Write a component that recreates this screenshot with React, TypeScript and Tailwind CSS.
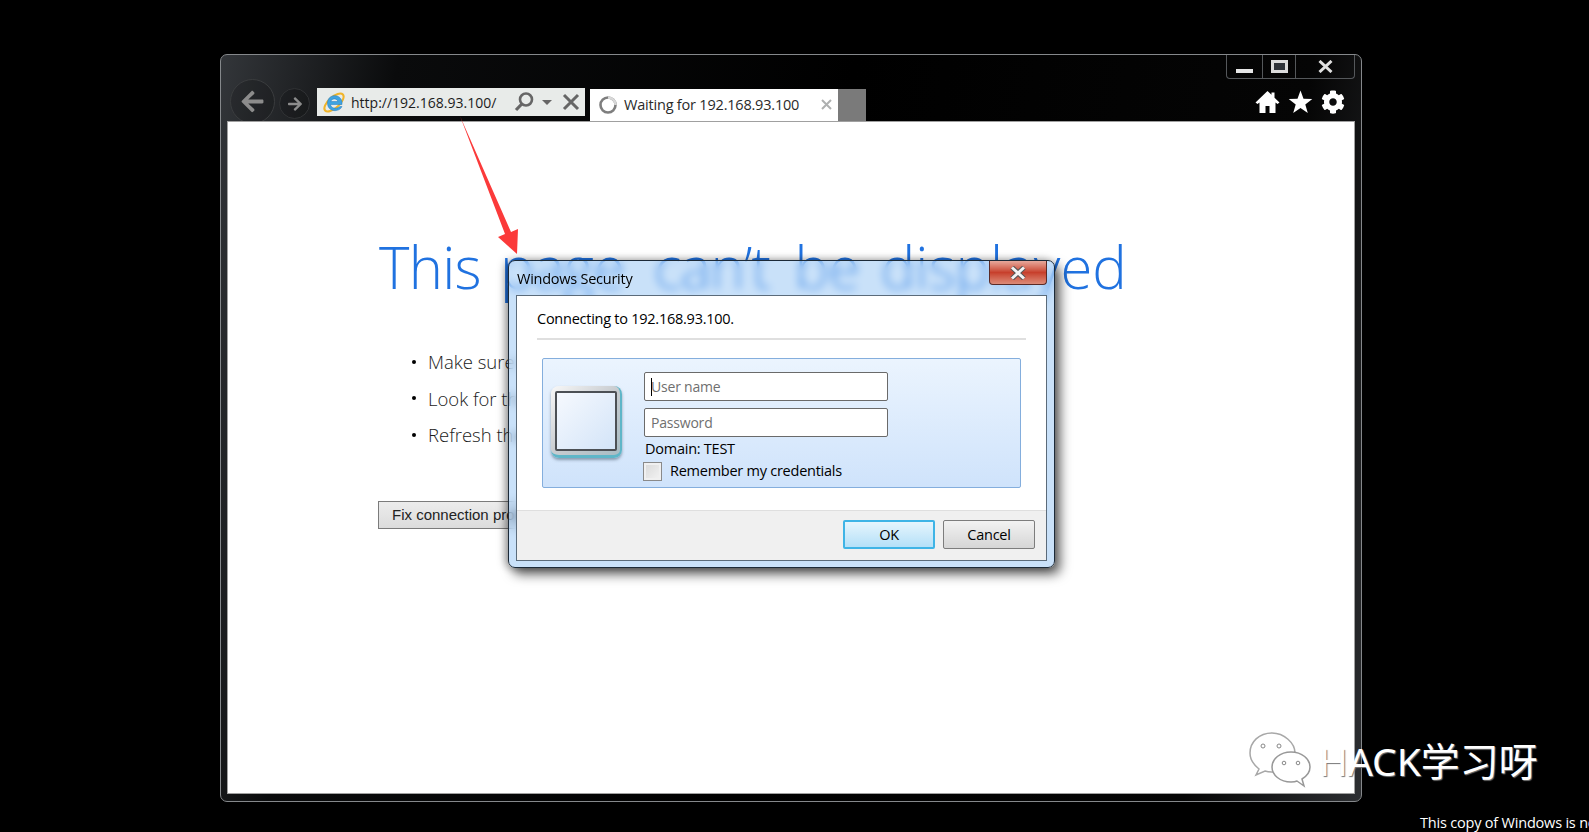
import { FaArrowLeft, FaArrowRight, FaCog } from 'react-icons/fa';

const SEGOE = "font-['Open_Sans','Noto_Sans',sans-serif]";

function IeLogo() {
  return (
    <svg width="24" height="25" viewBox="0 0 24 25" className="shrink-0">
      <ellipse cx="12" cy="12.5" rx="12" ry="5.5" transform="rotate(-42 12 12.5)" fill="none" stroke="#f0b429" strokeWidth="2" />
      <path d="M20 14.5H8.5c.4 4 6 5 9.5 2l2 0c-2.5 6-14.5 6-14.5-3.5 0-9 12.5-10 14.5-1.5z M8.8 11.5h7c-.6-3.5-6.2-3.5-7 0z" fill="#3fa3e0" fillRule="evenodd" stroke="#1f78c0" strokeWidth="0.5" />
    </svg>
  );
}

function AddressBar() {
  return (
    <div className="flex h-[28px] w-[268px] items-center bg-[#e8ebe9] pl-[5px]">
      <IeLogo />
      <span className={`${SEGOE} ml-[5px] w-[153px] text-[14px] whitespace-nowrap text-[#1c1c1c]`}>http://192.168.93.100/</span>
      <svg width="22" height="22" viewBox="0 0 22 22" className="ml-[9px]" fill="none" stroke="#666" strokeWidth="2.6">
        <circle cx="13" cy="8.5" r="6" />
        <path d="M8.8 13 3 19" strokeWidth="3.2" />
      </svg>
      <span className="ml-[7px] h-0 w-0 border-x-[5px] border-t-[5px] border-x-transparent border-t-[#666]" />
      <svg width="18" height="18" viewBox="0 0 18 18" className="ml-[10px]" stroke="#666" strokeWidth="3">
        <path d="M2 2l14 14M16 2 2 16" />
      </svg>
    </div>
  );
}

function Tab() {
  return (
    <div className="flex h-[33px] w-[248px] items-center bg-white pb-[2px] pl-[8px]">
      <svg width="20" height="20" viewBox="0 0 20 20" fill="none" className="shrink-0">
        <circle cx="10" cy="10" r="7.5" stroke="#7e7e7e" strokeWidth="2.6" />
        <path d="M10 2.5a7.5 7.5 0 0 1 7.5 7.5" stroke="#d8d8d8" strokeWidth="2.6" />
      </svg>
      <span className={`${SEGOE} ml-[6px] w-[197px] text-[14.5px] tracking-[-0.2px] whitespace-nowrap text-[#2a2a2a]`}>Waiting for 192.168.93.100</span>
      <svg width="11" height="11" viewBox="0 0 11 11" stroke="#aeb0b0" strokeWidth="2">
        <path d="M1 1l9 9M10 1 1 10" />
      </svg>
    </div>
  );
}

function CaptionButtons() {
  return (
    <div className="flex h-[24px] w-[129px] rounded-b-[4px] border border-t-0 border-[#55585b]">
      <div className="flex w-[36px] items-end justify-center border-r border-[#55585b] pb-[5px]">
        <span className="h-[4px] w-[17px] bg-[#e6e6e6]" />
      </div>
      <div className="flex w-[33px] items-center justify-center border-r border-[#55585b]">
        <span className="h-[13px] w-[17px] border-[3px] border-[#dcdcdc] bg-[#30343a]" />
      </div>
      <div className="flex flex-1 items-center justify-center">
        <svg width="15" height="13" viewBox="0 0 15 13" stroke="#e0e0e0" strokeWidth="3">
          <path d="M1.5 1 13.5 12M13.5 1 1.5 12" />
        </svg>
      </div>
    </div>
  );
}

function Toolbar() {
  return (
    <div className="flex h-[66px] flex-col">
      <div className="flex justify-end">
        <CaptionButtons />
      </div>
      <div className="flex flex-1 items-end">
        <div className="mb-[-2px] ml-[3px] flex h-[45px] w-[45px] items-center justify-center rounded-full border border-[#3a3c3e] bg-black/15">
          <FaArrowLeft className="text-[25px] text-[#8c8c8c]" />
        </div>
        <div className="mb-[3px] ml-[4px] flex h-[31px] w-[31px] items-center justify-center rounded-full border border-[#303234] bg-black/15">
          <FaArrowRight className="text-[16px] text-[#8c8c8c]" />
        </div>
        <div className="mb-[6px] ml-[7px]">
          <AddressBar />
        </div>
        <div className="ml-[5px]">
          <Tab />
        </div>
        <div className="h-[33px] w-[28px] bg-[#7a7a7a]" />
        <div className="mb-[8px] ml-auto flex items-center gap-[8px] pr-[10px] text-white">
          <svg width="25" height="24" viewBox="0 0 25 24" fill="currentColor">
            <path d="M12.5 1 0.5 12.5l2 1.5L4.500 12.400V23h6v-7h4v7h6V12.400L22.500 14l2-1.500L19.500 7.700V2.500h-3v2.300z" />
          </svg>
          <svg width="25" height="24" viewBox="0 0 25 24" fill="currentColor">
            <path d="M12.500 0.500 15.500 8.800 24.300 9.100 17.300 14.500 19.800 23 12.500 18 5.200 23 7.700 14.500 0.700 9.100 9.500 8.800z" />
          </svg>
          <FaCog className="text-[24px]" />
        </div>
      </div>
    </div>
  );
}

function ErrorPage() {
  const items = [
    'Make sure the web address http://192.168.93.100 is correct.',
    'Look for the page with your search engine.',
    'Refresh the page in a few minutes.',
  ];
  return (
    <div className={`${SEGOE} relative flex-1 overflow-hidden border border-[#a0a0a0] bg-white pl-[151px]`}>
      <h1 className="mt-[104px] h-[82px] text-[58px] leading-[82px] font-light tracking-[-0.75px] [word-spacing:10px] whitespace-nowrap text-[#2072e0]">
        This <span className="mr-[5px] -ml-[5px]">page</span> can’t be <span className="-ml-[3px] tracking-normal">displayed</span>
      </h1>
      <ul className="mt-[40px] ml-[33px] flex flex-col gap-[9.5px] text-[18.5px] leading-[27px] font-light text-[#1a1a1a]">
        {items.map((item) => (
          <li key={item} className="flex items-center whitespace-nowrap">
            <span className="mr-[12px] h-[4px] w-[4px] rounded-full bg-black" />
            {item}
          </li>
        ))}
      </ul>
      <button className="mt-[53px] -ml-[1px] flex h-[28px] w-[228px] items-center border border-[#7b7b7b] bg-gradient-to-b from-[#ececec] to-[#dcdcdc] pl-[13px] font-['Liberation_Sans',sans-serif] text-[15px] text-[#222]">
        Fix connection problems
      </button>
    </div>
  );
}

function UserTile() {
  return (
    <div className="-ml-[1px] flex h-[72px] w-[71px] shrink-0 items-center justify-center rounded-[8px] border-r-2 border-b-[3px] border-[#5fb6c8] bg-gradient-to-br from-[#f8f8f8] via-[#c8ccd0] to-[#a8bcc4] shadow-[0_2px_3px_rgba(60,80,100,0.5)]">
      <div className="h-[60px] w-[62px] rounded-[2px] border-2 border-[#4c5055] bg-gradient-to-br from-[#f6f9fe] to-[#d3e4f8]" />
    </div>
  );
}

function CredentialInput({ placeholder, caret }: { placeholder: string; caret?: boolean }) {
  return (
    <div className="relative h-[29px] w-[244px]">
      <input
        readOnly
        placeholder={placeholder}
        className={`${SEGOE} h-full w-full rounded-[2px] border border-[#6a6a6a] bg-white pl-[6px] text-[14px] tracking-[-0.2px] placeholder:text-[#6f6f6f]`}
      />
      {caret && <span className="absolute top-[6px] left-[7px] h-[18px] w-px bg-black" />}
    </div>
  );
}

function SecurityDialog() {
  return (
    <div className={`${SEGOE} absolute top-[260px] left-[508px] flex h-[308px] w-[547px] flex-col rounded-[7px] border border-[#1c2a38] bg-[#94c4f4]/50 px-[7px] pb-[6px] shadow-[5px_6px_12px_rgba(0,0,0,0.65),-3px_0_8px_rgba(0,0,0,0.35)] backdrop-blur-[4px]`}>
      <div className="flex h-[34px] shrink-0 justify-between">
        <span className="mt-[8px] ml-[1px] text-[14.5px] leading-[20px] tracking-[-0.25px] text-black">Windows Security</span>
        <div className="flex h-[24px] w-[58px] items-center justify-center rounded-b-[4px] border border-t-0 border-[#5a2a26] bg-gradient-to-b from-[#e6a89c] via-[#c73f2c] to-[#dc8a78]">
          <svg width="18" height="14" viewBox="0 0 18 14">
            <path d="M3 1.500 15 12.500M15 1.500 3 12.500" stroke="#555" strokeWidth="5" />
            <path d="M3 1.500 15 12.500M15 1.500 3 12.500" stroke="#f4f4f4" strokeWidth="3" />
          </svg>
        </div>
      </div>
      <div className="flex flex-1 flex-col border border-[#5b6b7a] bg-white">
        <div className="flex-1 px-[20px]">
          <p className="mt-[13px] text-[14.5px] leading-[20px] tracking-[-0.25px] text-black">Connecting to 192.168.93.100.</p>
          <div className="mt-[9px] h-[2px] w-[489px] bg-[#dfdfdf]" />
          <div className="mt-[18px] ml-[5px] flex h-[130px] w-[479px] items-start rounded-[2px] border border-[#84aedd] bg-gradient-to-b from-[#ebf4fe] to-[#cfe3fb] pt-[13px] pl-[9px]">
            <div className="mt-[14px]">
              <UserTile />
            </div>
            <div className="ml-[22px] flex flex-col">
              <CredentialInput placeholder="User name" caret />
              <div className="mt-[7px]">
                <CredentialInput placeholder="Password" />
              </div>
              <span className="mt-[2px] ml-[1px] text-[14.5px] leading-[20px] tracking-[-0.25px] text-black">Domain: TEST</span>
              <div className="mt-[2px] -ml-[1px] flex items-center">
                <span className="h-[19px] w-[19px] border border-[#8a8a8a] bg-gradient-to-br from-[#d8d8d8] to-[#f4f4f4] shadow-[inset_0_0_0_2px_#f0f0f0]" />
                <span className="ml-[8px] text-[14.5px] leading-[20px] tracking-[-0.25px] text-black">Remember my credentials</span>
              </div>
            </div>
          </div>
        </div>
        <div className="flex h-[50px] items-start justify-end gap-[8px] border-t border-[#dfdfdf] bg-[#f0f0f0] pt-[9px] pr-[11px]">
          <button className="h-[29px] w-[92px] rounded-[2px] border-2 border-[#3fb4e6] bg-gradient-to-b from-[#e6f5fd] to-[#b4e0f8] text-[14.5px] tracking-[-0.25px] text-black">OK</button>
          <button className="h-[29px] w-[92px] rounded-[2px] border border-[#7d7d7d] bg-gradient-to-b from-[#f2f2f2] to-[#d6d6d6] text-[14.5px] tracking-[-0.25px] text-black">Cancel</button>
        </div>
      </div>
    </div>
  );
}

function Watermark() {
  return (
    <>
      <svg className="absolute top-[730px] left-[1246px]" width="68" height="60" viewBox="0 0 68 60">
        <path d="M26 3C13 3 4 12 4 23c0 7 4 12 9 16l-3 6 9-4c3 1 5 1 8 1 12 0 22-9 22-19S38 3 26 3z" fill="#fff" stroke="#a8a8a8" strokeWidth="1.500" />
        <circle cx="17" cy="16" r="2" fill="none" stroke="#888" />
        <circle cx="33" cy="16" r="2" fill="none" stroke="#888" />
        <path d="M45 22c-11 0-19 7-19 15s8 15 19 15c2 0 4 0 6-1l7 5-2-7c5-3 8-7 8-12 0-8-8-15-19-15z" fill="#fff" stroke="#989898" strokeWidth="1.500" />
        <circle cx="38" cy="33" r="1.800" fill="none" stroke="#888" />
        <circle cx="52" cy="33" r="1.800" fill="none" stroke="#888" />
      </svg>
      <span className="absolute top-[736px] left-[1319px] font-['Noto_Sans','Noto_Sans_CJK_SC',sans-serif] text-[39px] leading-[50px] whitespace-nowrap text-white [text-shadow:1px_1px_1px_#777]">
        HACK学习呀
      </span>
    </>
  );
}

export default function App() {
  return (
    <div className="relative h-screen w-screen overflow-hidden bg-black pt-[54px] pl-[220px]">
      <div className="flex h-[748px] w-[1142px] flex-col rounded-[7px] border border-[#85888b] bg-[linear-gradient(100deg,#33363a_0%,#0a0b0c_14%,#000_50%,#050505_86%,#2d2f32_100%)] px-[6px] pb-[7px]">
        <Toolbar />
        <ErrorPage />
      </div>

      <svg className="absolute top-[112px] left-[455px]" width="70" height="146" viewBox="0 0 70 146">
        <path d="M5 4 56 120 63 117 62 142 43 125 50 122z" fill="#fb3a3a" />
      </svg>

      <SecurityDialog />
      <Watermark />

      <span className={`${SEGOE} absolute top-[813px] left-[1420px] text-[14.5px] leading-[20px] tracking-[-0.2px] whitespace-nowrap text-white`}>
        This copy of Windows is not genuine
      </span>
    </div>
  );
}
